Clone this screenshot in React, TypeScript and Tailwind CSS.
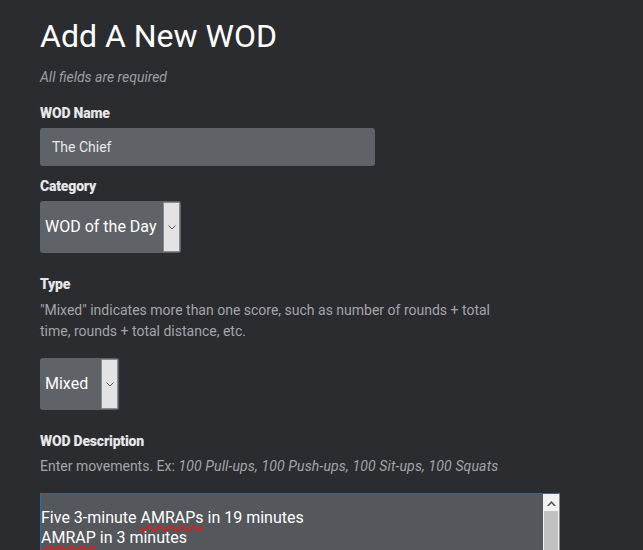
import React from "react";

/**
 * WOD追加フォーム
 * ダークテーマのフォーム画面
 */

function FakeSelect({ label, width }: { label: string; width: string }) {
  return (
    <div
      className={`flex h-[52px] ${width} items-stretch rounded-[3px] bg-[#5f6267] p-px`}
    >
      <div className="flex flex-1 items-center pl-1 text-[16px] text-white">
        {label}
      </div>
      {/* ネイティブ風の矢印ボタン */}
      <div className="flex w-[17px] items-center justify-center border border-[#8a8a8a] bg-[#e3e3e3]">
        <svg width="8" height="5" viewBox="0 0 8 5" fill="none">
          <path d="M0.5 0.5 L4 4 L7.5 0.5" stroke="#555" strokeWidth="1" />
        </svg>
      </div>
    </div>
  );
}

function Label({ children, className = "" }: { children: React.ReactNode; className?: string }) {
  return (
    <div className={`text-[14px] font-black leading-[18px] tracking-[-0.2px] text-[#e6e6e8] ${className}`}>
      {children}
    </div>
  );
}

// スペルチェック風の赤い波線
function Misspelled({ children }: { children: React.ReactNode }) {
  return (
    <span className="underline decoration-[#e01b1b] decoration-wavy decoration-[1.5px] underline-offset-[2px]">
      {children}
    </span>
  );
}

export default function App() {
  return (
    <div
      className="h-[550px] w-[643px] overflow-hidden bg-[#2b2c30] pl-10"
      style={{ fontFamily: "Roboto, 'Liberation Sans', sans-serif" }}
    >
      {/* タイトル */}
      <h1 className="pt-[16px] text-[32px] font-normal leading-[40px] text-white">
        Add A New WOD
      </h1>
      <p className="mt-[11px] text-[14px] italic leading-[20px] text-[#9c9ea3]">
        All fields are required
      </p>

      {/* WOD名 */}
      <Label className="mt-[17px]">WOD Name</Label>
      <div className="mt-[6px] flex h-[38px] w-[335px] items-center rounded-[3px] bg-[#5f6267] pl-3 text-[14px] text-[#e8e8ea]">
        The Chief
      </div>

      {/* カテゴリ */}
      <Label className="mt-[11px]">Category</Label>
      <div className="mt-[6px]">
        <FakeSelect label="WOD of the Day" width="w-[141px]" />
      </div>

      {/* タイプ */}
      <Label className="mt-[22px]">Type</Label>
      <p className="mt-[7px] w-[460px] text-[14px] leading-[21px] text-[#a3a5aa]">
        "Mixed" indicates more than one score, such as number of rounds + total
        time, rounds + total distance, etc.
      </p>
      <div className="mt-[16px]">
        <FakeSelect label="Mixed" width="w-[79px]" />
      </div>

      {/* 説明 */}
      <Label className="mt-[22px]">WOD Description</Label>
      <p className="mt-[6px] text-[14px] leading-[20px] text-[#a3a5aa]">
        Enter movements. Ex:{" "}
        <span className="italic tracking-[0.15px]">
          100 Pull-ups, 100 Push-ups, 100 Sit-ups, 100 Squats
        </span>
      </p>

      <div className="mt-[17px] flex h-[80px] w-[520px] border border-[#1f6fb2] border-r-[#8a8a8a] bg-[#54575b]">
        <div className="flex-1 pt-[14px] text-[16px] leading-[20px] text-white">
          <div>
            Five 3-minute <Misspelled>AMRAPs</Misspelled> in 19 minutes
          </div>
          <div>
            <Misspelled>AMRAP</Misspelled> in 3 minutes
          </div>
        </div>
        {/* スクロールバー */}
        <div className="flex w-[16px] flex-col bg-[#f1f1f1]">
          <div className="flex h-[17px] items-center justify-center">
            <svg width="9" height="6" viewBox="0 0 9 6">
              <path d="M0 6 L4.5 1 L9 6 L7 6 L4.5 3.3 L2 6 Z" fill="#505050" />
            </svg>
          </div>
          <div className="mx-[1px] flex-1 bg-[#c1c1c1]" />
        </div>
      </div>
    </div>
  );
}
